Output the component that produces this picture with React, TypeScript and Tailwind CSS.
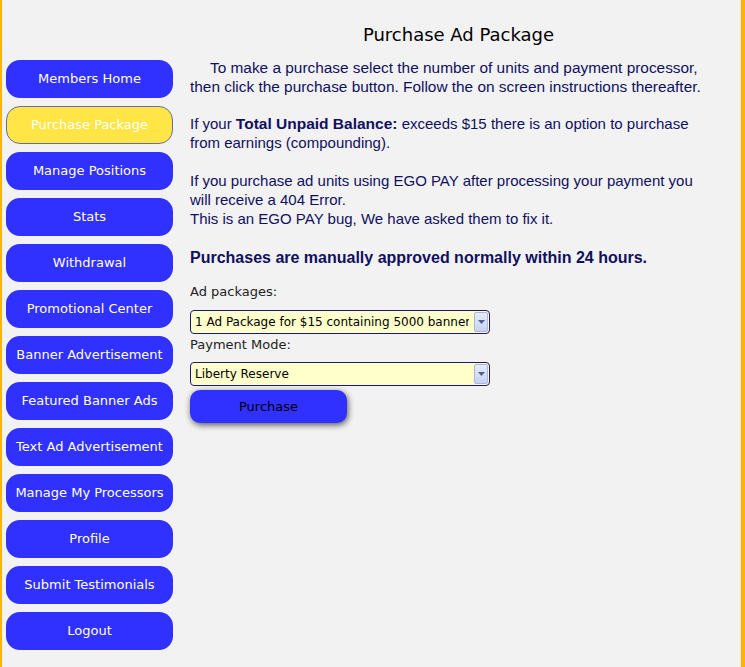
import React from "react";

const MENU = [
  "Members Home",
  "Purchase Package",
  "Manage Positions",
  "Stats",
  "Withdrawal",
  "Promotional Center",
  "Banner Advertisement",
  "Featured Banner Ads",
  "Text Ad Advertisement",
  "Manage My Processors",
  "Profile",
  "Submit Testimonials",
  "Logout",
];

const ACTIVE = "Purchase Package";

function SelectBox({ value, options }: { value: string; options: string[] }) {
  return (
    <div className="relative w-[300px] h-[24px]">
      <select
        defaultValue={value}
        className="appearance-none w-full h-full rounded-[4px] border border-[#1a1a6e] bg-[#ffffcc] pl-[4px] pr-[20px] text-[12px] text-black font-['DejaVu_Sans',sans-serif] overflow-hidden outline-none"
      >
        {options.map((o) => (
          <option key={o}>{o}</option>
        ))}
      </select>
      {/* dropdown arrow box */}
      <span className="pointer-events-none absolute right-[2px] top-[2px] bottom-[2px] w-[14px] rounded-[2px] border border-[#a9b8dc] bg-gradient-to-b from-[#e6ecfb] to-[#c5d2f2] flex items-center justify-center">
        <svg width="7" height="4" viewBox="0 0 7 4">
          <path d="M0 0h7L3.5 4z" fill="#4d5f9e" />
        </svg>
      </span>
    </div>
  );
}

export default function App() {
  return (
    <div className="h-[667px] w-[745px] bg-[#f2f2f2] border-l-2 border-r-4 border-[#ffb400] flex overflow-hidden">
      <nav className="ml-[4px] mt-[60px] w-[167px] flex flex-col gap-[8px] shrink-0">
        {MENU.map((item) =>
          item === ACTIVE ? (
            <a
              key={item}
              className="h-[38px] rounded-[14px] border border-[#6d6ba3] bg-[#ffe545] text-white text-[13px] flex items-center justify-center font-['DejaVu_Sans',sans-serif]"
            >
              {item}
            </a>
          ) : (
            <a
              key={item}
              className="h-[38px] rounded-[14px] bg-[#3030ff] text-white text-[13px] flex items-center justify-center font-['DejaVu_Sans',sans-serif]"
            >
              {item}
            </a>
          )
        )}
      </nav>

      <main className="ml-[17px] flex-1 pt-[24px] border-r border-[#e4e4e4]">
        <h1 className="pr-[13px] text-center text-[18px] leading-[22px] text-black font-['DejaVu_Sans',sans-serif] mb-[12px]">
          Purchase Ad Package
        </h1>

        <div className="pr-[29px] text-[15px] leading-[19px] text-[#10105e] font-['Liberation_Sans',Arial,sans-serif]">
          <p className="indent-[20px] text-[15.4px]">
            To make a purchase select the number of units and payment processor, then click the
            purchase button. Follow the on screen instructions thereafter.
          </p>
          <p className="mt-[18px]">
            If your <b className="text-[15.5px]">Total Unpaid Balance:</b> exceeds $15 there is an
            option to purchase from earnings (compounding).
          </p>
          <p className="mt-[19px]">
            If you purchase ad units using EGO PAY after processing your payment you will receive
            a 404 Error.
            <br />
            This is an EGO PAY bug, We have asked them to fix it.
          </p>
          <p className="mt-[20px] text-[16px] font-bold">
            Purchases are manually approved normally within 24 hours.
          </p>
        </div>

        <form className="mt-[6px] font-['DejaVu_Sans',sans-serif] text-[13px] text-[#222]">
          <div className="h-[37px] pt-[1px] flex items-center">Ad packages:</div>
          <SelectBox
            value="1 Ad Package for $15 containing 5000 banner impressions"
            options={["1 Ad Package for $15 containing 5000 banner impressions"]}
          />
          <div className="h-[28px] pt-[3px] leading-[15px]">Payment Mode:</div>
          <SelectBox value="Liberty Reserve" options={["Liberty Reserve", "EGO PAY", "Solid Trust Pay"]} />
          <button
            type="button"
            className="mt-[4px] w-[157px] h-[33px] rounded-[10px] bg-[#3030ff] text-black text-[13px] shadow-[1px_2px_6px_rgba(0,0,0,0.65)]"
          >
            Purchase
          </button>
        </form>
      </main>
    </div>
  );
}
